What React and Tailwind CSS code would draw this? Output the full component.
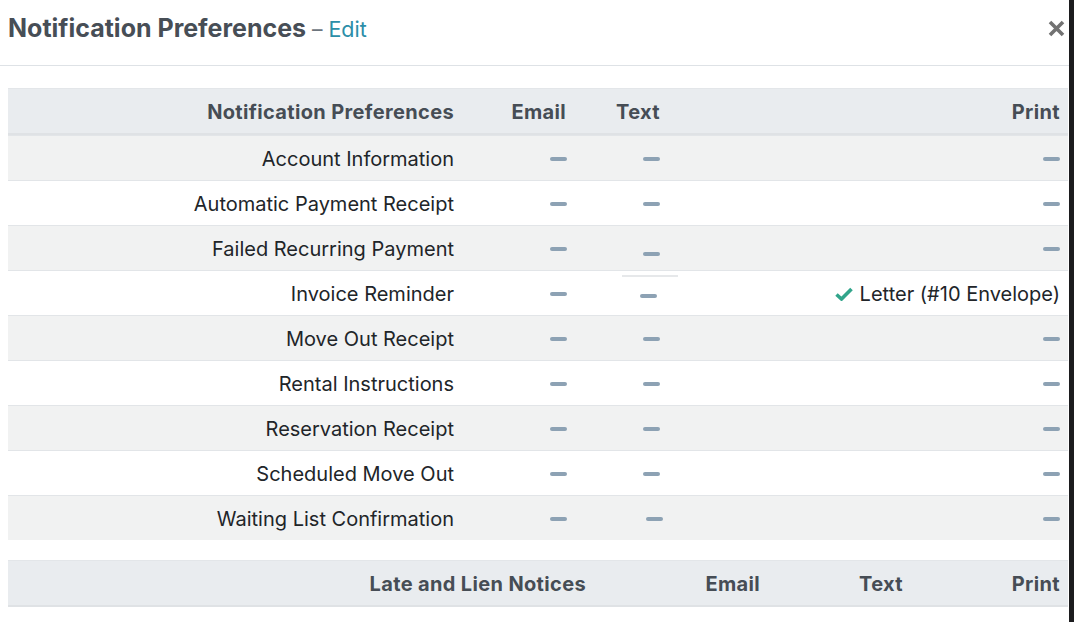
// Notification preferences modal — tabla de preferencias por canal.

const rows = [
  { name: 'Account Information' },
  { name: 'Automatic Payment Receipt' },
  { name: 'Failed Recurring Payment', textShift: 'translate-y-[4px]', mark: true },
  { name: 'Invoice Reminder', textShift: '-translate-x-[3px] translate-y-[1px]', print: 'Letter (#10 Envelope)' },
  { name: 'Move Out Receipt' },
  { name: 'Rental Instructions' },
  { name: 'Reservation Receipt' },
  { name: 'Scheduled Move Out' },
  { name: 'Waiting List Confirmation', textShift: 'translate-x-[3px]' },
];

function Dash({ className = '' }) {
  return <span className={`inline-block w-[17px] h-[4px] rounded-full bg-[#8da2b4] align-middle ${className}`} />;
}

function Check() {
  return (
    <svg width="18" height="14" viewBox="0 0 18 14" className="inline-block mr-[7px] -mt-[3px]">
      <path d="M1.5 7.5 L6.5 12 L16.5 2" fill="none" stroke="#32a58b" strokeWidth="3.6" />
    </svg>
  );
}

function CloseIcon() {
  return (
    <svg width="17" height="17" viewBox="0 0 17 17" className="-mt-[8px]">
      <path d="M2 2 L15 15 M15 2 L2 15" stroke="#727272" strokeWidth="3.6" />
    </svg>
  );
}

export default function App() {
  return (
    <div className="w-[1074px] h-[622px] bg-white flex overflow-hidden" style={{ fontFamily: 'Inter, "Noto Sans", sans-serif' }}>
      <div className="flex-1 flex flex-col">
        {/* Header */}
        <header className="h-[66px] flex items-center justify-between pl-[8px] pr-[4px] border-b border-[#dee2e6]">
          <h1 className="text-[25px] font-bold text-[#474e56] tracking-[0px] -mt-[8px]">
            Notification Preferences
            <span className="font-normal text-[21px] text-[#6c757d]"> – </span>
            <span className="font-normal text-[21.5px] text-[#2c8ea8]">Edit</span>
          </h1>
          <CloseIcon />
        </header>

        {/* Tabla principal */}
        <div className="mt-[22px] ml-[8px] mr-[1px] text-[20px] text-[#212529]">
          <div className="grid grid-cols-[454px_112px_94px_1fr] bg-[#e9ecef] border-t border-[#e3e6e9] border-b-2 border-b-[#dfe2e5] h-[47px] items-center font-bold text-[#464d55] text-right tracking-[0.35px]">
            <div className="pr-[8px] translate-y-[1px]">Notification Preferences</div>
            <div className="pr-[8px] translate-y-[1px]">Email</div>
            <div className="pr-[8px] translate-y-[1px]">Text</div>
            <div className="pr-[8px] translate-y-[1px]">Print</div>
          </div>
          {rows.map((r, i) => (
            <div
              key={r.name}
              className={`grid grid-cols-[454px_112px_94px_1fr] h-[45px] items-center text-right border-t border-[#e2e5e8] first:border-t-0 ${
                i % 2 === 0 ? 'bg-[#f1f2f2]' : 'bg-white'
              }`}
            >
              <div className="pr-[8px] translate-y-[1px]">{r.name}</div>
              <div className="pr-[7px]"><Dash className="-translate-y-[1px]" /></div>
              <div className="pr-[8px] relative">
                <Dash className={`-translate-y-[1px] ${r.textShift || ''}`} />
                {r.mark && <span className="absolute left-[48px] w-[56px] bottom-[-14px] h-[2px] bg-[#e6e8ea]" />}
              </div>
              <div className="pr-[8px] translate-y-[1px]">
                {r.print ? (
                  <span>
                    <Check />
                    {r.print}
                  </span>
                ) : (
                  <Dash className="-translate-y-[2px]" />
                )}
              </div>
            </div>
          ))}
        </div>

        {/* Segunda tabla */}
        <div className="mt-[20px] ml-[8px] mr-[1px] text-[20px]">
          <div className="grid grid-cols-[586px_174px_143px_1fr] bg-[#e9ecef] border-t border-[#e3e6e9] border-b-2 border-b-[#dfe2e5] h-[47px] items-center font-bold text-[#464d55] text-right tracking-[0.35px]">
            <div className="pr-[8px] translate-y-[1px]">Late and Lien Notices</div>
            <div className="pr-[8px] translate-y-[1px]">Email</div>
            <div className="pr-[8px] translate-y-[1px]">Text</div>
            <div className="pr-[8px] translate-y-[1px]">Print</div>
          </div>
        </div>
      </div>
      {/* borde oscuro a la derecha */}
      <div className="w-[5px] bg-[#1c1c1e]" />
    </div>
  );
}
